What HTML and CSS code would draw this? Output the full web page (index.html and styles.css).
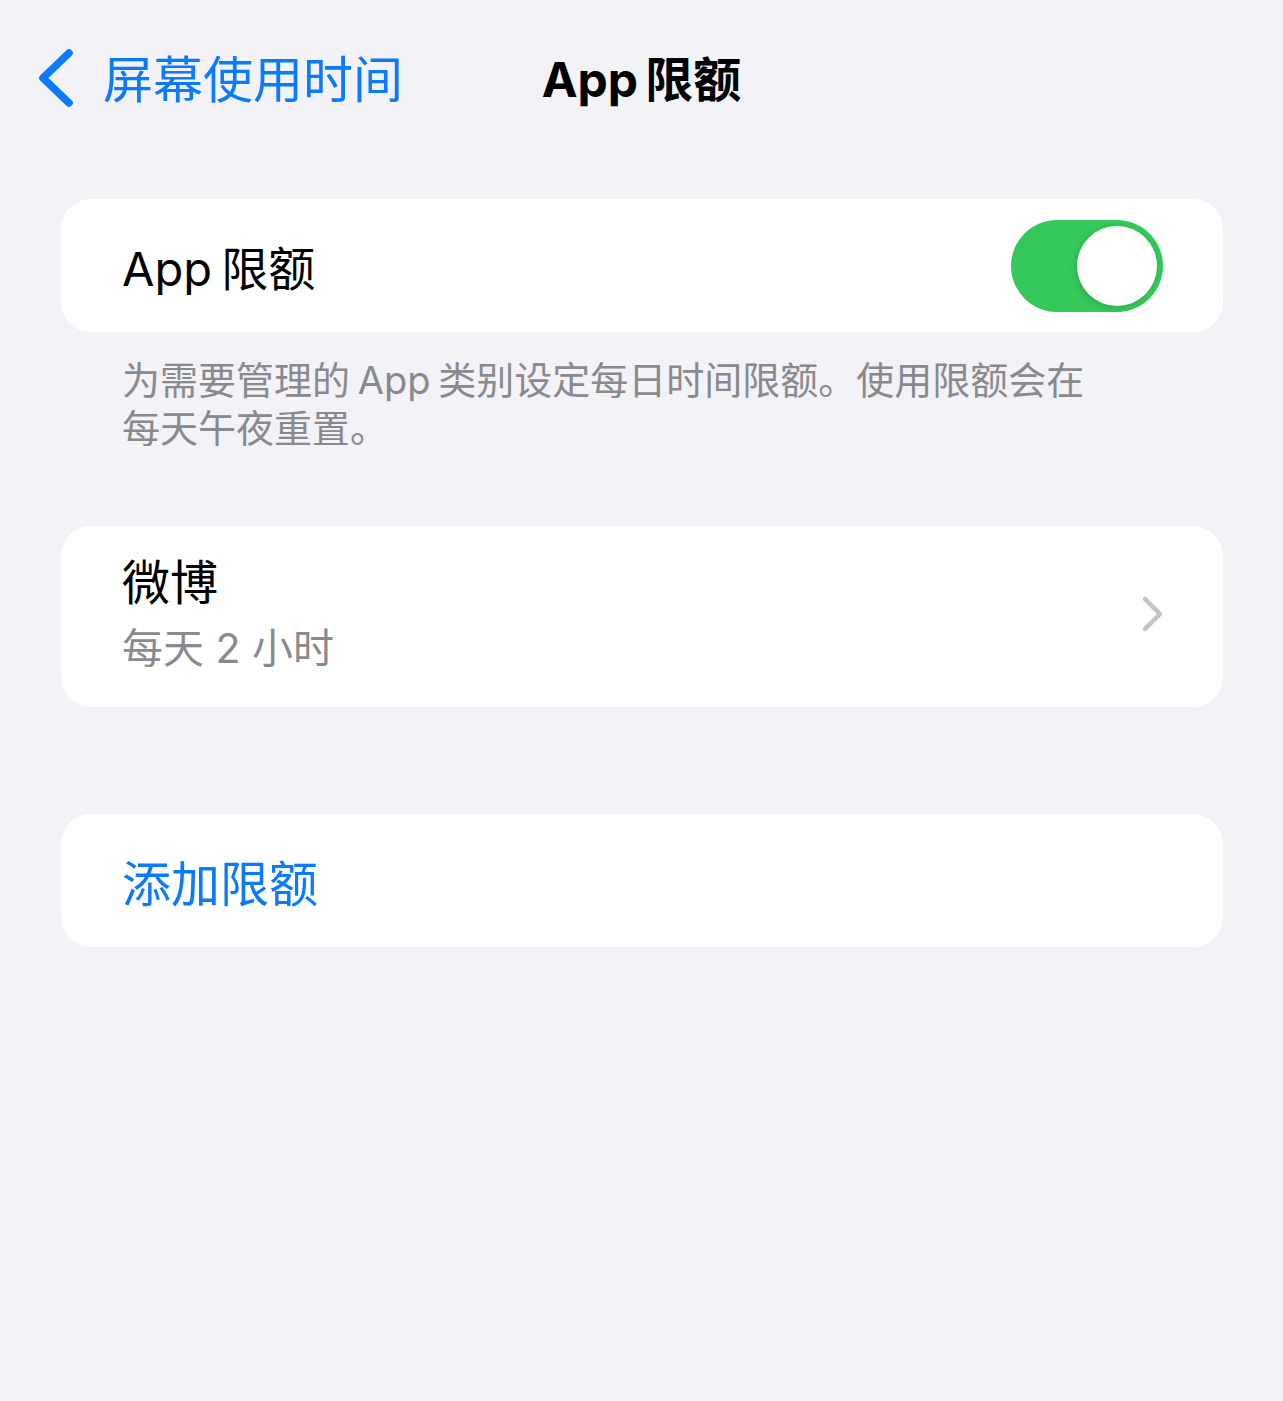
FILE: index.html
```html
<!DOCTYPE html>
<html lang="zh-CN">

<head>
    <meta charset="UTF-8">
    <meta name="viewport" content="width=device-width, initial-scale=1.0">
    <title>App 限额</title>

    <link rel="stylesheet" href="styles.css">
</head>

<body>
    <div class="nav-bar">
        <a class="back-link" href="#">
            <svg class="back-icon" width="38" height="60" viewBox="0 0 38 60">
                <path d="M32 5 L6 30 L32 55" fill="none" stroke="#0a7aff" stroke-width="7.5" stroke-linecap="round" stroke-linejoin="round" />
            </svg>
            <span>屏幕使用时间</span>
        </a>
        <h1 class="nav-title">App 限额</h1>
        <div></div>
    </div>

    <div class="settings">
        <div class="card toggle-row">
            <span class="row-label">App 限额</span>
            <div class="switch on">
                <div class="knob"></div>
            </div>
        </div>
        <p class="footer-note">为需要管理的 App 类别设定每日时间限额。使用限额会在每天午夜重置。</p>

        <a class="card limit-row" href="#">
            <div class="limit-info">
                <div class="limit-name">微博</div>
                <div class="limit-time">每天 2 小时</div>
            </div>
            <svg class="chevron" width="24" height="38" viewBox="0 0 24 38">
                <path d="M4 4 L19 19 L4 34" fill="none" stroke="#c4c4c7" stroke-width="4.5" stroke-linecap="round" stroke-linejoin="round" />
            </svg>
        </a>

        <div class="card action-row">
            <a class="action-link" href="#">添加限额</a>
        </div>
    </div>
</body>

</html>
```

FILE: styles.css
```css
body {
    font-family: Inter, "Noto Sans CJK SC", sans-serif;
    background-color: #f2f2f7;
    margin: 0;
    padding: 0;
    color: #000;
}

a {
    text-decoration: none;
}

.nav-bar {
    height: 158px;
    box-sizing: border-box;
    padding-bottom: 6px;
    display: grid;
    grid-template-columns: 1fr auto 1fr;
    align-items: center;
}

.back-link {
    display: flex;
    align-items: center;
    gap: 28px;
    padding-left: 37px;
    color: #0a7aff;
    font-size: 50px;
}

.back-icon {
    display: block;
    margin-top: 4px;
}

.nav-title {
    margin: 0;
    font-size: 48px;
    font-weight: 700;
    word-spacing: -4px;
}

.settings {
    padding: 41px 60px 0 61px;
}

.card {
    display: flex;
    align-items: center;
    background-color: #fff;
    border-radius: 30px;
    padding: 0 60px 0 61px;
}

.toggle-row {
    height: 133px;
    justify-content: space-between;
}

.row-label {
    font-size: 47px;
    word-spacing: -4px;
}

.switch {
    width: 152px;
    height: 92px;
    border-radius: 46px;
    background-color: #e9e9eb;
    padding: 6px;
    box-sizing: border-box;
    display: flex;
}

.switch.on {
    background-color: #34c759;
    justify-content: flex-end;
}

.knob {
    width: 80px;
    height: 80px;
    border-radius: 50%;
    background-color: #fff;
    box-shadow: -2px 2px 6px rgba(0, 0, 0, 0.12);
}

.footer-note {
    margin: 24px 0 74px 0;
    padding: 0 112px 0 61px;
    font-size: 38px;
    line-height: 48px;
    color: #8a8a8e;
    word-spacing: -3px;
}

.limit-row {
    justify-content: space-between;
    padding-top: 28px;
    padding-bottom: 33px;
    color: #000;
}

.limit-name {
    font-size: 48px;
    line-height: 58px;
}

.limit-time {
    margin-top: 10px;
    font-size: 41px;
    line-height: 52px;
    color: #8a8a8e;
}

.chevron {
    display: block;
    margin-right: -2px;
}

.action-row {
    height: 133px;
    margin-top: 107px;
}

.action-link {
    color: #0a7aff;
    font-size: 49px;
}
```
